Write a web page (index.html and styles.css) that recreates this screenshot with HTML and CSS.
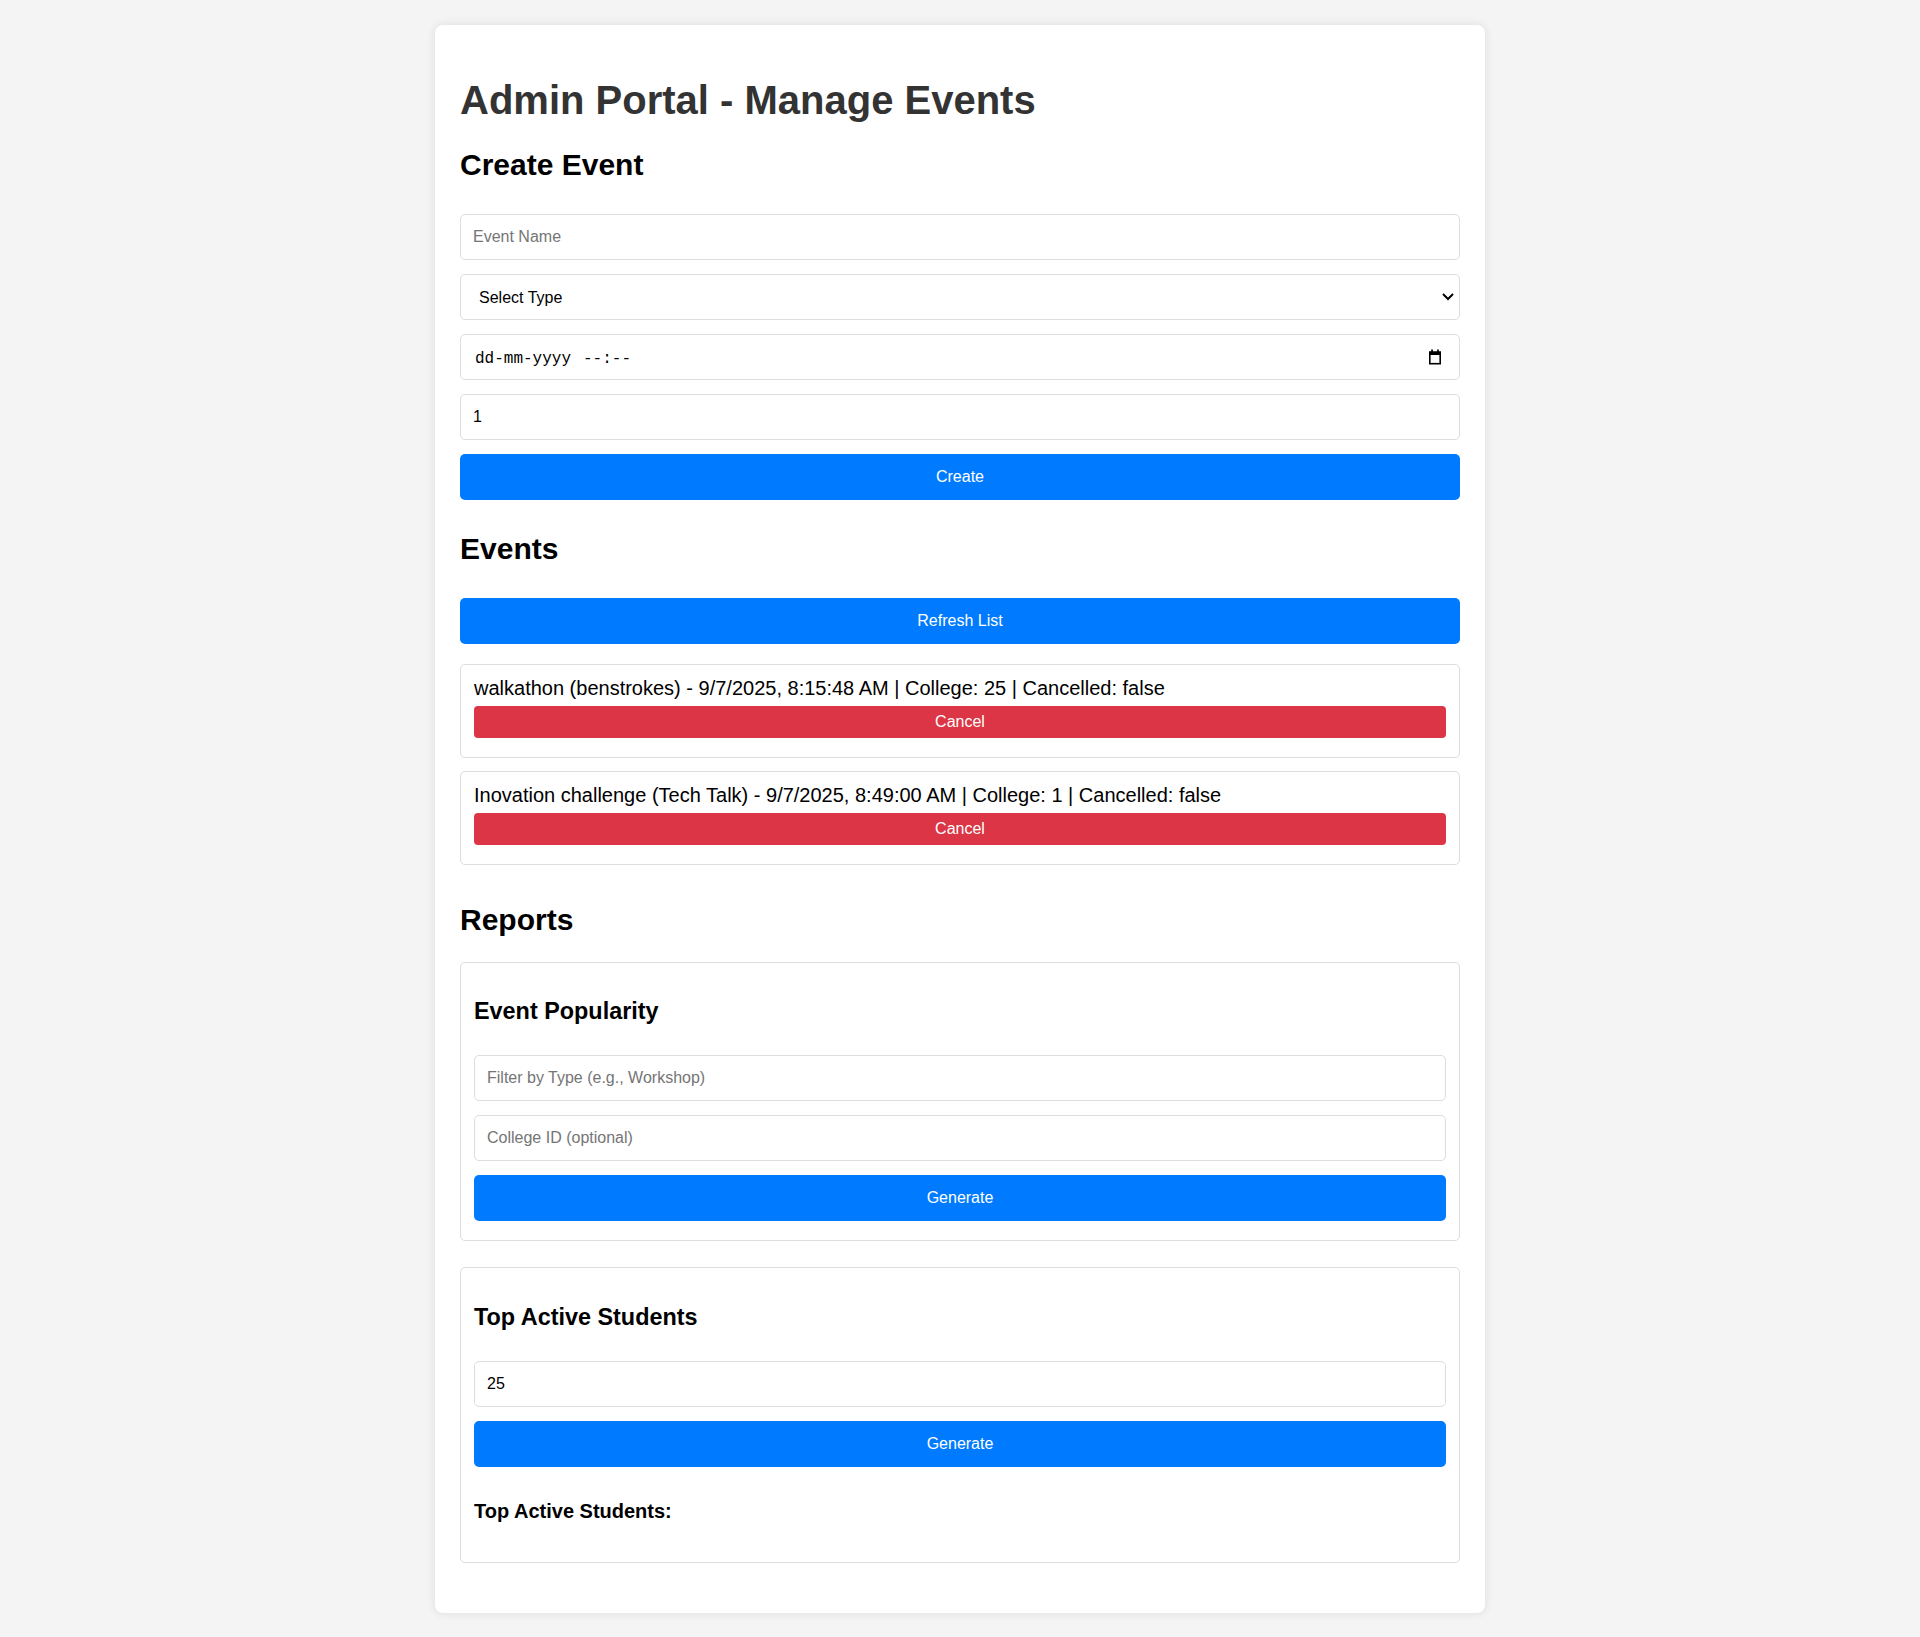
FILE: index.html
```html
<!DOCTYPE html>
<html lang="en">
<head>
<meta charset="utf-8">
<title>Admin Portal - Manage Events</title>
<link rel="stylesheet" href="styles.css">
</head>
<body>
<div class="container">
  <h1 class="title">Admin Portal - Manage Events</h1>

  <h2 class="section-title">Create Event</h2>
  <form class="stack create-form">
    <input class="field" type="text" placeholder="Event Name">
    <div class="field select-field">
      <select class="select">
        <option>Select Type</option>
        <option>Workshop</option>
        <option>Tech Talk</option>
        <option>Seminar</option>
      </select>
      <svg class="chevron" width="12" height="8" viewBox="0 0 12 8" aria-hidden="true"><polyline points="1,1 6,6 11,1" fill="none" stroke="#000" stroke-width="2"/></svg>
    </div>
    <div class="field date-field">
      <span class="date-text"><span>dd-mm-yyyy</span><span class="date-time">--:--</span></span>
      <svg class="calendar" width="14" height="16" viewBox="0 0 14 16" aria-hidden="true">
        <rect x="1.8" y="3.3" width="10.4" height="11.4" fill="none" stroke="#000" stroke-width="1.6"/>
        <rect x="1" y="2.5" width="12" height="3.5" fill="#000"/>
        <rect x="3.2" y="0.5" width="1.7" height="3" fill="#000"/>
        <rect x="9.1" y="0.5" width="1.7" height="3" fill="#000"/>
      </svg>
    </div>
    <input class="field" type="text" inputmode="numeric" value="1">
    <button class="btn" type="button">Create</button>
  </form>

  <h2 class="section-title events-title">Events</h2>
  <button class="btn refresh" type="button">Refresh List</button>
  <div class="event-list">
    <div class="event-card">
      <div class="event-text">walkathon (benstrokes) - 9/7/2025, 8:15:48 AM | College: 25 | Cancelled: false</div>
      <button class="btn-cancel" type="button">Cancel</button>
    </div>
    <div class="event-card">
      <div class="event-text">Inovation challenge (Tech Talk) - 9/7/2025, 8:49:00 AM | College: 1 | Cancelled: false</div>
      <button class="btn-cancel" type="button">Cancel</button>
    </div>
  </div>

  <h2 class="section-title reports-title">Reports</h2>
  <div class="report-card">
    <h3 class="report-title">Event Popularity</h3>
    <div class="stack report-stack">
      <input class="field" type="text" placeholder="Filter by Type (e.g., Workshop)">
      <input class="field" type="text" placeholder="College ID (optional)">
      <button class="btn" type="button">Generate</button>
    </div>
  </div>
  <div class="report-card report-card-last">
    <h3 class="report-title">Top Active Students</h3>
    <div class="stack report-stack">
      <input class="field" type="text" inputmode="numeric" value="25">
      <button class="btn" type="button">Generate</button>
    </div>
    <h4 class="result-title">Top Active Students:</h4>
  </div>
</div>
</body>
</html>
```

FILE: styles.css
```css
html, body {
  margin: 0;
}

body {
  padding: 25px 0;
  background: #f4f4f4;
  font-family: "Liberation Sans", Arial, sans-serif;
  font-size: 20px;
  color: #000;
}

.container {
  width: 1000px;
  margin: 0 auto;
  padding: 25px;
  background: #fff;
  border-radius: 8px;
  box-shadow: 0 0 10px rgba(0, 0, 0, 0.1);
}

.title {
  font-size: 40px;
  line-height: 46px;
  font-weight: bold;
  color: #333;
  margin: 27px 0 0;
}

.section-title {
  font-size: 30px;
  line-height: 34px;
  font-weight: bold;
  margin: 25px 0 0;
}

.stack {
  display: flex;
  flex-direction: column;
  gap: 14px;
}

.create-form {
  margin: 32px 0 0;
}

.field {
  box-sizing: border-box;
  width: 100%;
  height: 46px;
  margin: 0;
  padding: 0 12px;
  border: 1px solid #ddd;
  border-radius: 5px;
  background: #fff;
  font-family: "Liberation Sans", Arial, sans-serif;
  font-size: 16px;
  color: #000;
  outline: none;
}

.field::placeholder {
  color: #757575;
}

.select-field {
  display: flex;
  align-items: center;
  padding: 0 5px 0 18px;
}

.select {
  flex: 1;
  height: 100%;
  margin: 0;
  padding: 0;
  border: none;
  background: transparent;
  appearance: none;
  -webkit-appearance: none;
  font-family: "Liberation Sans", Arial, sans-serif;
  font-size: 16px;
  color: #000;
  outline: none;
}

.chevron {
  display: block;
  flex: none;
}

.date-field {
  display: flex;
  align-items: center;
  justify-content: space-between;
  padding: 0 17px 0 14px;
}

.date-text {
  display: flex;
  gap: 12px;
  padding-top: 4px;
  font-family: "Liberation Mono", "Courier New", monospace;
  font-size: 16px;
  color: #000;
}

.calendar {
  display: block;
  flex: none;
}

.btn {
  display: block;
  box-sizing: border-box;
  width: 100%;
  height: 46px;
  margin: 0;
  padding: 0;
  border: none;
  border-radius: 5px;
  background: #007bff;
  color: #fff;
  font-family: "Liberation Sans", Arial, sans-serif;
  font-size: 16px;
  cursor: pointer;
}

.events-title {
  margin-top: 32px;
}

.refresh {
  margin-top: 32px;
}

.event-list {
  display: flex;
  flex-direction: column;
  gap: 13px;
  margin-top: 20px;
}

.event-card {
  border: 1px solid #ddd;
  border-radius: 5px;
  padding: 12px 13px;
}

.event-text {
  font-size: 20px;
  line-height: 23px;
}

.btn-cancel {
  display: block;
  box-sizing: border-box;
  width: 100%;
  height: 32px;
  margin: 6px 0 7px;
  padding: 0;
  border: none;
  border-radius: 4px;
  background: #dc3545;
  color: #fff;
  font-family: "Liberation Sans", Arial, sans-serif;
  font-size: 16px;
  cursor: pointer;
}

.reports-title {
  margin-top: 38px;
}

.report-card {
  border: 1px solid #ddd;
  border-radius: 5px;
  padding: 12px 13px;
  margin-top: 25px;
}

.report-card-last {
  margin-top: 26px;
  margin-bottom: 25px;
}

.report-title {
  font-size: 23.4px;
  line-height: 27px;
  font-weight: bold;
  margin: 23.4px 0 0;
}

.report-stack {
  margin-top: 30px;
  padding-bottom: 7px;
}

.report-card-last .report-stack {
  padding-bottom: 0;
}

.result-title {
  font-size: 20px;
  line-height: 23px;
  font-weight: bold;
  margin: 33px 0 27.6px;
}
```
